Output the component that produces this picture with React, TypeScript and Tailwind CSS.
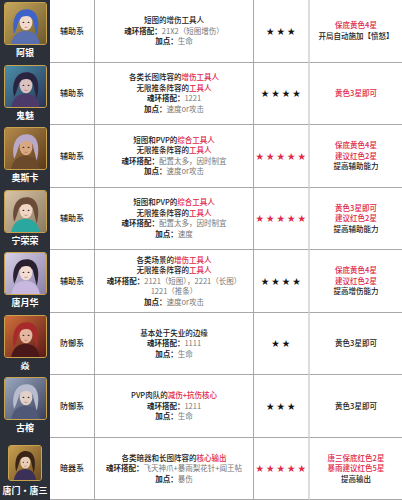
import React from "react";

const RED = "text-[#e0274a]";

type Seg = { t: string; red?: boolean };
type Line = { label?: string; value?: string; segs?: Seg[] };

type Row = {
  name: string;
  type: string;
  lines: Line[];
  stars: number;
  redStars?: boolean;
  notes: { t: string; red?: boolean }[];
  av: { bg1: string; bg2: string; hair: string; face: string; cloth: string };
};

const rows: Row[] = [
  {
    name: "阿银",
    type: "辅助系",
    lines: [
      { segs: [{ t: "短图的增伤工具人" }] },
      { label: "魂环搭配：", value: "21X2（短图增伤）" },
      { label: "加点：", value: "生命" },
    ],
    stars: 3,
    notes: [{ t: "保底黄色4星", red: true }, { t: "开局自动施加【愤怒】" }],
    av: { bg1: "#c8a75c", bg2: "#6b5a2e", hair: "#3f63c9", face: "#f1d9cc", cloth: "#5a6fb0" },
  },
  {
    name: "鬼魅",
    type: "辅助系",
    lines: [
      { segs: [{ t: "各类长图阵容的" }, { t: "增伤工具人", red: true }] },
      { segs: [{ t: "无限推条阵容的" }, { t: "工具人", red: true }] },
      { label: "魂环搭配：", value: "1221" },
      { label: "加点：", value: "速度or攻击" },
    ],
    stars: 4,
    notes: [{ t: "黄色3星即可", red: true }],
    av: { bg1: "#4a8fa8", bg2: "#2a3458", hair: "#2a2440", face: "#d9c2c0", cloth: "#4b3a6a" },
  },
  {
    name: "奥斯卡",
    type: "辅助系",
    lines: [
      { segs: [{ t: "短图和PVP的" }, { t: "综合工具人", red: true }] },
      { segs: [{ t: "无限推条阵容的" }, { t: "工具人", red: true }] },
      { label: "魂环搭配：", value: "配置太多，因时制宜" },
      { label: "加点：", value: "速度or攻击" },
    ],
    stars: 5,
    redStars: true,
    notes: [{ t: "保底黄色4星", red: true }, { t: "建议红色2星", red: true }, { t: "提高辅助能力" }],
    av: { bg1: "#b58a4a", bg2: "#5a3a1c", hair: "#b9a8c8", face: "#d8a882", cloth: "#6a4a2a" },
  },
  {
    name: "宁荣荣",
    type: "辅助系",
    lines: [
      { segs: [{ t: "短图和PVP的" }, { t: "综合工具人", red: true }] },
      { segs: [{ t: "无限推条阵容的" }, { t: "工具人", red: true }] },
      { label: "魂环搭配：", value: "配置太多，因时制宜" },
      { label: "加点：", value: "速度" },
    ],
    stars: 5,
    redStars: true,
    notes: [{ t: "黄色3星即可", red: true }, { t: "建议红色2星", red: true }, { t: "提高辅助能力" }],
    av: { bg1: "#d9c4a8", bg2: "#8a7a60", hair: "#6a4a38", face: "#f0d4c4", cloth: "#2aa8a0" },
  },
  {
    name: "唐月华",
    type: "辅助系",
    lines: [
      { segs: [{ t: "各类场景的" }, { t: "增伤工具人", red: true }] },
      { segs: [{ t: "无限推条阵容的" }, { t: "工具人", red: true }] },
      { label: "魂环搭配：", value: "2121（短图），2221（长图）" },
      { value: "1221（推条）" },
      { label: "加点：", value: "速度or攻击" },
    ],
    stars: 4,
    notes: [{ t: "保底黄色4星", red: true }, { t: "建议红色2星", red: true }, { t: "提高增伤能力" }],
    av: { bg1: "#d8d0e8", bg2: "#8a80a8", hair: "#2a2030", face: "#f2dcd4", cloth: "#c8b8e0" },
  },
  {
    name: "焱",
    type: "防御系",
    lines: [
      { segs: [{ t: "基本处于失业的边缘" }] },
      { label: "魂环搭配：", value: "1111" },
      { label: "加点：", value: "生命" },
    ],
    stars: 2,
    notes: [{ t: "黄色3星即可" }],
    av: { bg1: "#d0703a", bg2: "#5a1a18", hair: "#a82a2a", face: "#e4b8a0", cloth: "#4a1818" },
  },
  {
    name: "古榕",
    type: "防御系",
    lines: [
      { segs: [{ t: "PVP肉队的" }, { t: "减伤+抗伤核心", red: true }] },
      { label: "魂环搭配：", value: "1211" },
      { label: "加点：", value: "生命" },
    ],
    stars: 3,
    notes: [{ t: "黄色3星即可" }],
    av: { bg1: "#9aa8c0", bg2: "#3a4058", hair: "#b8bcd0", face: "#e0d0c8", cloth: "#505878" },
  },
  {
    name: "唐门・唐三",
    type: "暗器系",
    lines: [
      { segs: [{ t: "各类暗器和长图阵容的" }, { t: "核心输出", red: true }] },
      { label: "魂环搭配：", value: "飞天神爪+暴雨梨花针+阎王帖" },
      { label: "加点：", value: "暴伤" },
    ],
    stars: 5,
    redStars: true,
    notes: [{ t: "唐三保底红色2星", red: true }, { t: "暴雨建议红色5星", red: true }, { t: "提高输出" }],
    av: { bg1: "#c8a050", bg2: "#6a4a20", hair: "#3a2418", face: "#e8cdb8", cloth: "#3a3058" },
  },
];

function Avatar({ av, small, id }: { av: Row["av"]; small?: boolean; id: number }) {
  const size = small ? "w-[34px] h-[36px]" : "w-[43px] h-[43px]";
  return (
    <div className={`${size} rounded-[3px] border-[1.5px] border-[#c9a24e] overflow-hidden bg-[#6b5a2e]`}>
      <svg viewBox="0 0 40 40" className="w-full h-full" preserveAspectRatio="none">
        <defs>
          <linearGradient id={`g${id}`} x1="0" y1="0" x2="1" y2="1">
            <stop offset="0" stopColor={av.bg1} />
            <stop offset="1" stopColor={av.bg2} />
          </linearGradient>
        </defs>
        <rect width="40" height="40" fill={`url(#g${id})`} />
        <path d="M6 40 C8 30 14 27 20 27 C26 27 32 30 34 40 Z" fill={av.cloth} />
        <path d="M9 30 C6 18 10 6 21 6 C31 6 35 16 31 32 C29 24 28 20 27 16 L14 16 C12 22 11 26 9 30 Z" fill={av.hair} />
        <ellipse cx="20.5" cy="19" rx="6.2" ry="7.6" fill={av.face} />
        <path d="M13 16 C15 9 26 8 28 16 C25 12 18 11 13 16 Z" fill={av.hair} />
        <ellipse cx="18" cy="19" rx="0.9" ry="0.6" fill="#3a2a2a" />
        <ellipse cx="23" cy="19" rx="0.9" ry="0.6" fill="#3a2a2a" />
        <path d="M19 23.5 Q20.5 24.4 22 23.5" stroke="#b06060" strokeWidth="0.6" fill="none" />
      </svg>
    </div>
  );
}

function Stars({ n, red }: { n: number; red?: boolean }) {
  return (
    <span className={`text-[8px] tracking-[2.5px] pl-[2px] ${red ? "text-[#e0274a]" : "text-[#111]"}`}>
      {"★".repeat(n)}
    </span>
  );
}

export default function App() {
  return (
    <div className="w-[402px] h-[500px] bg-white font-['Noto_Sans_CJK_SC','Noto_Sans',sans-serif] overflow-hidden flex flex-col">
      {rows.map((r, i) => (
        <div key={i} className="grid grid-cols-[50px_45px_159px_56px_92px] h-[62.5px] shrink-0">
          <div className="bg-[#2c3039] flex flex-col items-center pt-[2px]">
            <div className={`flex items-center justify-center ${r.name === "唐门・唐三" ? "h-[43px] pt-[4px]" : "h-[43px]"}`}>
              <Avatar av={r.av} small={r.name === "唐门・唐三"} id={i} />
            </div>
            <div className="text-white text-[9px] font-bold leading-[14px] mt-[1px] whitespace-nowrap">{r.name}</div>
          </div>
          <div className="border-r border-b border-[#a8a8a8] flex items-center justify-center text-[8px] font-medium text-[#222]">
            {r.type}
          </div>
          <div className="border-r border-b border-[#a8a8a8] flex flex-col items-center justify-center text-[7.5px] leading-[10.5px] text-center">
            {r.lines.map((l, j) => (
              <div key={j} className="whitespace-nowrap">
                {l.segs
                  ? l.segs.map((s, k) => (
                      <span key={k} className={s.red ? `${RED} font-medium` : "text-[#222] font-medium"}>
                        {s.t}
                      </span>
                    ))
                  : (
                    <>
                      {l.label && <span className="text-[#222] font-bold">{l.label}</span>}
                      <span className="text-[#777]">{l.value}</span>
                    </>
                  )}
              </div>
            ))}
          </div>
          <div className="border-r-2 border-r-[#dcdcdc] border-b border-b-[#a8a8a8] flex items-center justify-center">
            <Stars n={r.stars} red={r.redStars} />
          </div>
          <div className="border-b border-[#a8a8a8] flex flex-col items-center justify-center text-[7.5px] leading-[10.5px] text-center">
            {r.notes.map((n, j) => (
              <div key={j} className={`whitespace-nowrap ${n.red ? RED : "text-[#222]"} font-medium`}>
                {n.t}
              </div>
            ))}
          </div>
        </div>
      ))}
    </div>
  );
}
